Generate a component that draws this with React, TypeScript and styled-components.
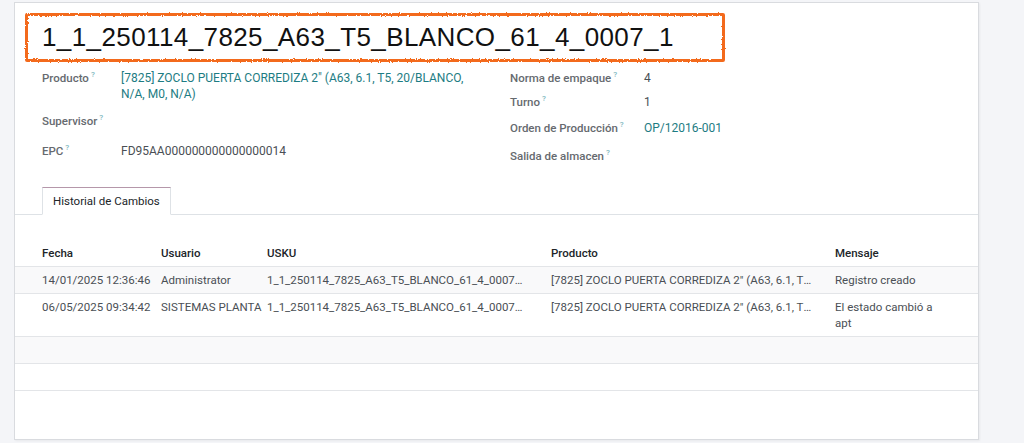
import React from 'react';
import styled, { createGlobalStyle } from 'styled-components';

/* ── Global ── */

const GlobalStyle = createGlobalStyle`
  html, body {
    margin: 0;
    padding: 0;
    background: #f4f5f8;
  }
  body {
    width: 1024px;
    height: 443px;
    overflow: hidden;
    font-family: Roboto, 'Liberation Sans', Arial, sans-serif;
    font-size: 12px;
    color: #4a4f55;
  }
`;

/* ── Styled Components ── */

const FilterDefs = styled.svg`
  position: absolute;
  width: 0;
  height: 0;
`;

const Page = styled.div`
  padding: 2px 0 0 14px;
`;

const Sheet = styled.div`
  width: 965px;
  height: 438px;
  box-sizing: border-box;
  background: #fff;
  border: 1px solid #d9dbdf;
  box-shadow: 1px 1px 2px rgba(0, 0, 0, 0.05);
`;

const TitleArea = styled.div`
  padding: 10px 0 0 10px;
`;

/* hand-drawn marker highlight around the record name */
const TitleBox = styled.div`
  position: relative;
  width: 700px;
  height: 49px;
  box-sizing: border-box;
  padding-left: 17px;
  display: flex;
  align-items: center;

  &::before {
    content: '';
    position: absolute;
    inset: 0;
    border: 3.5px solid #f36a1d;
    border-radius: 2px;
    filter: url(#marker-rough);
  }
`;

const Title = styled.h1`
  margin: 0;
  font-family: 'Liberation Sans', Arial, sans-serif;
  font-size: 26px;
  font-weight: 400;
  letter-spacing: 0.4px;
  color: #111;
`;

const FieldsGrid = styled.div`
  display: grid;
  grid-template-columns: 468px 1fr;
  padding: 8px 0 0 27px;
`;

const FieldGroup = styled.div`
  display: flex;
  flex-direction: column;
`;

const FieldRow = styled.div<{ $h: number; $labelW: number }>`
  display: grid;
  grid-template-columns: ${({ $labelW }) => $labelW}px 1fr;
  height: ${({ $h }) => $h}px;
  line-height: 16px;
`;

const Label = styled.div`
  font-size: 11.5px;
  font-weight: 500;
  color: #666a6f;
  white-space: nowrap;
`;

const Help = styled.sup`
  margin-left: 2px;
  font-size: 8px;
  color: #7fb8c0;
  vertical-align: top;
  position: relative;
  top: -3px;
`;

const Value = styled.div<{ $link?: boolean; $maxW?: number }>`
  color: ${({ $link }) => ($link ? '#1d7c83' : '#4a4f55')};
  max-width: ${({ $maxW }) => ($maxW ? `${$maxW}px` : 'none')};
`;

const TabBar = styled.div`
  margin-top: 14px;
  padding-left: 27px;
  display: flex;
  border-bottom: 1px solid #dee2e6;
`;

const Tab = styled.div`
  height: 28px;
  box-sizing: border-box;
  padding: 0 10px;
  margin-bottom: -1px;
  background: #fff;
  border: 1px solid #dee2e6;
  border-top-color: #b597aa;
  border-bottom-color: #fff;
  line-height: 26px;
  font-size: 11.5px;
  color: #212529;
`;

const Table = styled.table`
  margin-top: 25px;
  width: 100%;
  border-collapse: collapse;
  table-layout: fixed;
  font-size: 11.5px;
`;

const HeadCell = styled.th`
  text-align: left;
  font-weight: 500;
  color: #212529;
  padding: 5px 4px;
  line-height: 16px;
  border-bottom: 1px solid #e3e5e8;
  &:first-child {
    padding-left: 27px;
  }
`;

const BodyRow = styled.tr`
  &:nth-child(odd) {
    background: #f9f9fa;
  }
`;

const Cell = styled.td<{ $wrap?: boolean; $ellipsis?: boolean; $padR?: number }>`
  padding: 5px ${({ $padR }) => $padR ?? 2}px 5px 4px;
  line-height: 16px;
  height: 16px;
  border-bottom: 1px solid #e3e5e8;
  color: #4a4f55;
  vertical-align: top;
  white-space: ${({ $wrap }) => ($wrap ? 'normal' : 'nowrap')};
  overflow: ${({ $ellipsis }) => ($ellipsis ? 'hidden' : 'visible')};
  text-overflow: ${({ $ellipsis }) => ($ellipsis ? 'ellipsis' : 'clip')};
  &:first-child {
    padding-left: 27px;
  }
`;

/* ── Data ── */

const USKU = '1_1_250114_7825_A63_T5_BLANCO_61_4_0007_1';
const PRODUCT = '[7825] ZOCLO PUERTA CORREDIZA 2" (A63, 6.1, T5, 20/BLANCO, N/A, M0, N/A)';

const leftFields = [
  { label: 'Producto', value: PRODUCT, link: true, h: 43 },
  { label: 'Supervisor', value: '', h: 30 },
  { label: 'EPC', value: 'FD95AA000000000000000014', h: 30 },
];

const rightFields = [
  { label: 'Norma de empaque', value: '4', h: 24 },
  { label: 'Turno', value: '1', h: 26 },
  { label: 'Orden de Producción', value: 'OP/12016-001', link: true, h: 28 },
  { label: 'Salida de almacen', value: '', h: 24 },
];

const history = [
  {
    fecha: '14/01/2025 12:36:46',
    usuario: 'Administrator',
    mensaje: 'Registro creado',
  },
  {
    fecha: '06/05/2025 09:34:42',
    usuario: 'SISTEMAS PLANTA',
    mensaje: 'El estado cambió a apt',
  },
];

const columns = [
  { key: 'fecha', label: 'Fecha', width: 142 },
  { key: 'usuario', label: 'Usuario', width: 106 },
  { key: 'usku', label: 'USKU', width: 284 },
  { key: 'producto', label: 'Producto', width: 284 },
  { key: 'mensaje', label: 'Mensaje' },
];

/* ── Component ── */

const App: React.FC = () => {
  return (
    <Page>
      <GlobalStyle />
      <FilterDefs aria-hidden="true">
        <filter id="marker-rough">
          <feTurbulence type="fractalNoise" baseFrequency="0.9" numOctaves="2" result="noise" />
          <feDisplacementMap in="SourceGraphic" in2="noise" scale="3" />
        </filter>
      </FilterDefs>
      <Sheet>
        <TitleArea>
          <TitleBox>
            <Title>{USKU}</Title>
          </TitleBox>
        </TitleArea>

        <FieldsGrid>
          <FieldGroup>
            {leftFields.map((f) => (
              <FieldRow key={f.label} $h={f.h} $labelW={79}>
                <Label>
                  {f.label}
                  <Help>?</Help>
                </Label>
                <Value $link={f.link} $maxW={350}>
                  {f.value}
                </Value>
              </FieldRow>
            ))}
          </FieldGroup>
          <FieldGroup>
            {rightFields.map((f) => (
              <FieldRow key={f.label} $h={f.h} $labelW={134}>
                <Label>
                  {f.label}
                  <Help>?</Help>
                </Label>
                <Value $link={f.link}>{f.value}</Value>
              </FieldRow>
            ))}
          </FieldGroup>
        </FieldsGrid>

        <TabBar>
          <Tab>Historial de Cambios</Tab>
        </TabBar>

        <Table>
          <colgroup>
            {columns.map((c) => (
              <col key={c.key} style={c.width ? { width: c.width } : undefined} />
            ))}
          </colgroup>
          <thead>
            <tr>
              {columns.map((c) => (
                <HeadCell key={c.key}>{c.label}</HeadCell>
              ))}
            </tr>
          </thead>
          <tbody>
            {history.map((row) => (
              <BodyRow key={row.fecha}>
                <Cell>{row.fecha}</Cell>
                <Cell>{row.usuario}</Cell>
                <Cell $ellipsis $padR={22}>
                  {USKU}
                </Cell>
                <Cell $ellipsis $padR={14}>
                  {PRODUCT}
                </Cell>
                <Cell $wrap $padR={40}>
                  {row.mensaje}
                </Cell>
              </BodyRow>
            ))}
            {[0, 1].map((i) => (
              <BodyRow key={`empty-${i}`}>
                <Cell />
                <Cell />
                <Cell />
                <Cell />
                <Cell />
              </BodyRow>
            ))}
          </tbody>
        </Table>
      </Sheet>
    </Page>
  );
};

export default App;
